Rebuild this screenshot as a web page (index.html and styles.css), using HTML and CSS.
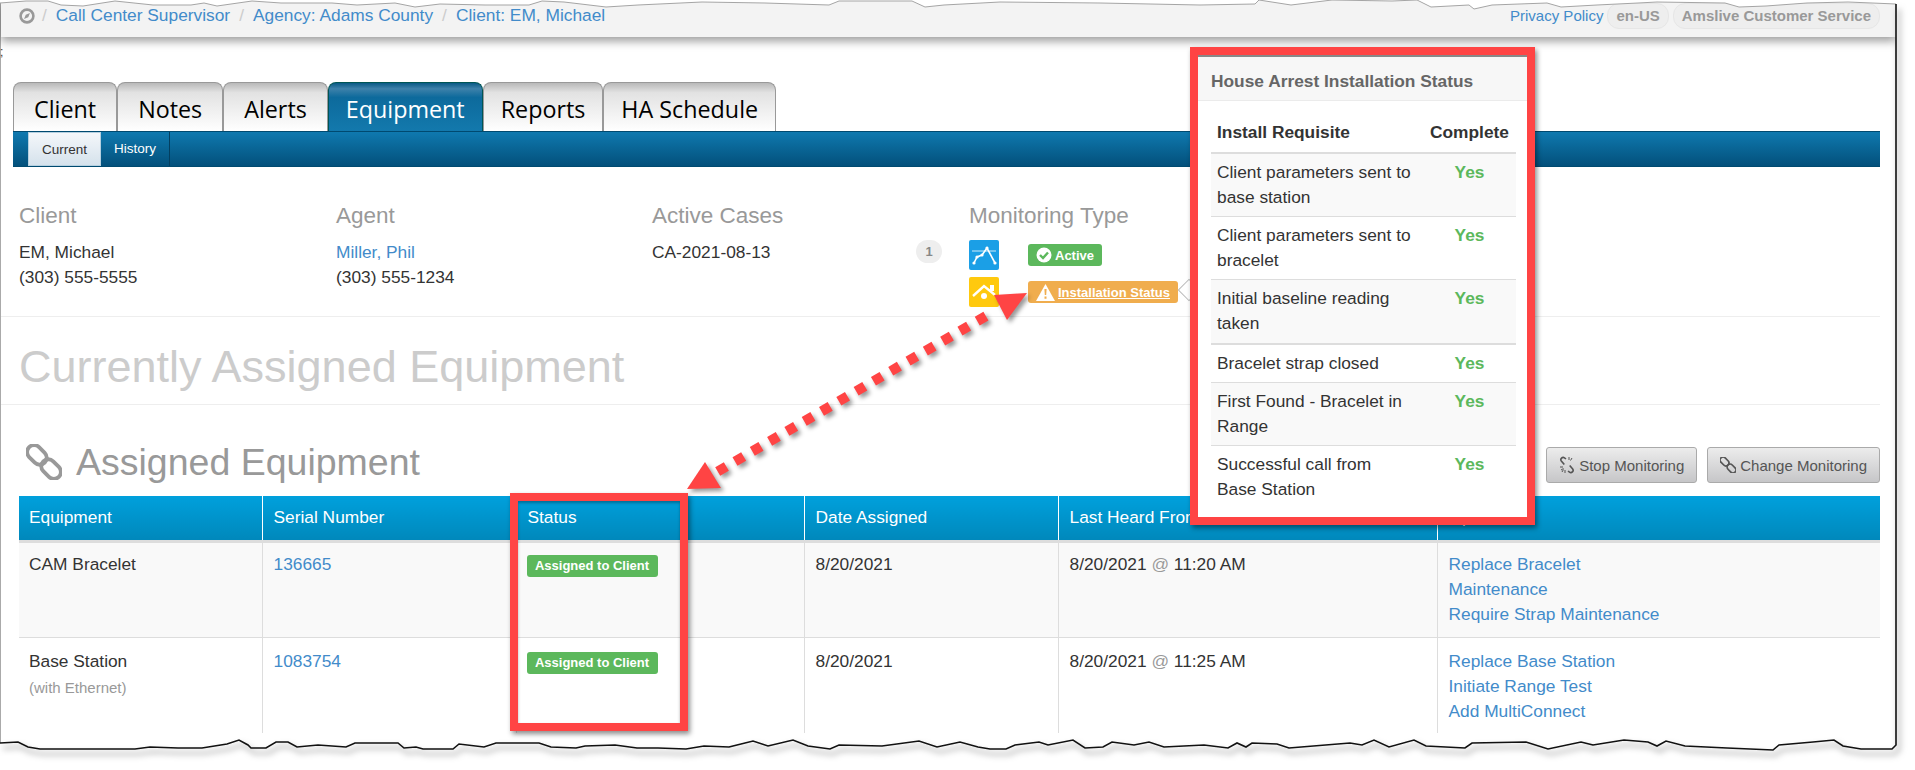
FILE: index.html
```html
<!DOCTYPE html>
<html>
<head>
    <meta charset="UTF-8">
    <meta name="viewport" content="width=device-width, initial-scale=1.0">
    <title>Assigned Equipment</title>
    <link rel="stylesheet" href="styles.css">
</head>
<body>
<div class="page">
    <div class="topbar">
        <div class="crumbs">
            <svg class="home-icon" width="16" height="16" viewBox="0 0 16 16"><circle cx="8" cy="8" r="6.4" fill="none" stroke="#999" stroke-width="2.6"/><path d="M11 5 L9.2 9.2 L5 11 L6.8 6.8 Z" fill="#999"/></svg>
            <span class="sep">/</span>
            <a href="#">Call Center Supervisor</a>
            <span class="sep">/</span>
            <a href="#">Agency: Adams County</a>
            <span class="sep">/</span>
            <a href="#">Client: EM, Michael</a>
        </div>
        <div class="top-right">
            <a href="#">Privacy Policy</a>
            <span class="pill">en-US</span>
            <span class="pill">Amslive Customer Service</span>
        </div>
    </div>

    <div class="tabs">
        <a class="tab" href="#">Client</a>
        <a class="tab" href="#">Notes</a>
        <a class="tab" href="#">Alerts</a>
        <a class="tab active" href="#">Equipment</a>
        <a class="tab" href="#">Reports</a>
        <a class="tab" href="#">HA Schedule</a>
    </div>
    <div class="subnav">
        <a class="subtab current" href="#">Current</a>
        <a class="subtab" href="#">History</a>
    </div>

    <div class="info">
        <div class="info-col">
            <div class="info-label">Client</div>
            <div>EM, Michael</div>
            <div>(303) 555-5555</div>
        </div>
        <div class="info-col">
            <div class="info-label">Agent</div>
            <div><a href="#">Miller, Phil</a></div>
            <div>(303) 555-1234</div>
        </div>
        <div class="info-col">
            <div class="info-label">Active Cases</div>
            <div class="case-row">
                <span>CA-2021-08-13</span>
                <span class="count">1</span>
            </div>
        </div>
        <div class="info-col">
            <div class="info-label">Monitoring Type</div>
            <div class="mon-row">
                <svg class="mon-icon" width="30" height="30" viewBox="0 0 30 30">
                    <rect width="30" height="30" rx="2" fill="#1b9fe6"/>
                    <path d="M3 11 H27" stroke="#fff" stroke-width="1" opacity=".8"/>
                    <path d="M5 23 L8 17 L13 15 L18 8 L26 23" fill="none" stroke="#fff" stroke-width="1.6"/>
                    <circle cx="5" cy="23" r="1.6" fill="#fff"/><circle cx="8" cy="17" r="1.6" fill="#fff"/><circle cx="13" cy="15" r="1.6" fill="#fff"/><circle cx="18" cy="8" r="1.6" fill="#fff"/><circle cx="26" cy="23" r="1.6" fill="#fff"/>
                </svg>
                <span class="label label-green">
                    <svg width="16" height="16" viewBox="0 0 16 16"><circle cx="8" cy="8" r="7.5" fill="#fff"/><path d="M4 8 L7 11 L12 5.5" fill="none" stroke="#5cb85c" stroke-width="2.4"/></svg>
                    Active
                </span>
            </div>
            <div class="mon-row">
                <svg class="mon-icon" width="30" height="30" viewBox="0 0 30 30">
                    <rect width="30" height="30" rx="2" fill="#ffc90e"/>
                    <path d="M4 19 L15 9 L26 18" fill="none" stroke="#fff" stroke-width="2.4"/>
                    <rect x="21" y="8" width="4" height="6" fill="#fff"/>
                    <circle cx="15" cy="19" r="3" fill="#fff"/>
                </svg>
                <span class="label label-orange">
                    <svg width="19" height="17" viewBox="0 0 19 17"><path d="M9.5 0 L19 17 H0 Z" fill="#fff"/><path d="M8.4 5 H10.6 L10.2 11 H8.8 Z M8.5 12.5 H10.5 V14.7 H8.5 Z" fill="#f0ad4e"/></svg>
                    <a href="#">Installation Status</a>
                </span>
            </div>
        </div>
    </div>

    <h1 class="page-title">Currently Assigned Equipment</h1>

    <div class="equip-head">
        <h2 class="equip-title">
            <svg width="36" height="36" viewBox="0 0 36 36"><g fill="none" stroke="#999" stroke-width="3.8" transform="rotate(45 18 18)"><rect x="-3" y="11" width="22" height="14" rx="7"/><rect x="17" y="11" width="22" height="14" rx="7"/></g></svg>
            Assigned Equipment
        </h2>
        <div class="equip-actions">
            <a class="btn" href="#">
                <svg width="16" height="18" viewBox="0 0 16 18"><g fill="none" stroke="#555" stroke-width="1.6"><path d="M7 3 L5.5 1.8 a2.3 2.3 0 0 0 -3.2 3.2 l3 3.5"/><path d="M9 15 L10.5 16.2 a2.3 2.3 0 0 0 3.2 -3.2 l-3 -3.5"/></g><path d="M10 1 V4 M13 2 L11.5 4.5 M1 11 H4 M2 14 L4.5 12.5 M6 14 V17 M3 16 L4.5 13.5" stroke="#555" stroke-width="1"/></svg>
                Stop Monitoring
            </a>
            <a class="btn" href="#">
                <svg width="16" height="16" viewBox="0 0 16 16"><g fill="none" stroke="#555" stroke-width="1.7" transform="rotate(45 8 8)"><rect x="-2" y="5" width="10" height="6" rx="3"/><rect x="8" y="5" width="10" height="6" rx="3"/></g></svg>
                Change Monitoring
            </a>
        </div>
    </div>

    <table class="equip-table">
        <thead>
            <tr>
                <th class="col-equipment">Equipment</th>
                <th class="col-serial">Serial Number</th>
                <th class="col-status">Status</th>
                <th class="col-date">Date Assigned</th>
                <th class="col-heard">Last Heard From</th>
                <th>Options</th>
            </tr>
        </thead>
        <tbody>
            <tr class="row-one">
                <td>CAM Bracelet</td>
                <td><a href="#">136665</a></td>
                <td><span class="label label-green label-small">Assigned to Client</span></td>
                <td>8/20/2021</td>
                <td>8/20/2021 <span class="at">@</span> 11:20 AM</td>
                <td>
                    <a class="option" href="#">Replace Bracelet</a>
                    <a class="option" href="#">Maintenance</a>
                    <a class="option" href="#">Require Strap Maintenance</a>
                </td>
            </tr>
            <tr class="row-two">
                <td>Base Station<small>(with Ethernet)</small></td>
                <td><a href="#">1083754</a></td>
                <td><span class="label label-green label-small">Assigned to Client</span></td>
                <td>8/20/2021</td>
                <td>8/20/2021 <span class="at">@</span> 11:25 AM</td>
                <td>
                    <a class="option" href="#">Replace Base Station</a>
                    <a class="option" href="#">Initiate Range Test</a>
                    <a class="option" href="#">Add MultiConnect</a>
                </td>
            </tr>
        </tbody>
    </table>

    <span class="stray">;</span>

    <!-- popover over the page -->
    <div class="pop-tail"></div>
    <div class="popover">
        <h3 class="pop-title">House Arrest Installation Status</h3>
        <div class="pop-body">
            <table class="pop-table">
                <thead>
                    <tr><th>Install Requisite</th><th class="pop-yes">Complete</th></tr>
                </thead>
                <tbody>
                    <tr><td>Client parameters sent to<br>base station</td><td class="pop-yes yes">Yes</td></tr>
                    <tr><td>Client parameters sent to<br>bracelet</td><td class="pop-yes yes">Yes</td></tr>
                    <tr class="pop-thick"><td>Initial baseline reading<br>taken</td><td class="pop-yes yes">Yes</td></tr>
                    <tr><td>Bracelet strap closed</td><td class="pop-yes yes">Yes</td></tr>
                    <tr><td>First Found - Bracelet in<br>Range</td><td class="pop-yes yes">Yes</td></tr>
                    <tr><td>Successful call from<br>Base Station</td><td class="pop-yes yes">Yes</td></tr>
                </tbody>
            </table>
        </div>
    </div>

    <div class="status-frame"></div>

    <!-- callout arrow -->
    <svg class="callout" width="1915" height="770" viewBox="0 0 1915 770">
        <path d="M717.7 471.5 L986 316" fill="none" stroke="#ff4444" stroke-width="10" stroke-dasharray="10 10"/>
        <polygon points="1027,293 994,295 1007,320" fill="#ff4444"/>
        <polygon points="687,489 705,462 721,488" fill="#ff4444"/>
    </svg>

    <!-- torn screenshot edges -->
    <svg class="torn" width="1915" height="770" viewBox="0 0 1915 770">
        <polygon fill="#fff" points="0,0 1915,0 1915,770 0,770 0,743 18,742 28,747 40,749 135,749 150,747 178,748 202,748 227,744 239,740 248,745 251,748 266,748 276,742 288,742 297,747 318,745 346,747 355,743 398,743 404,748 416,747 423,749 453,749 459,744 484,747 496,743 539,743 551,747 576,748 585,746 615,745 637,748 658,748 686,749 704,746 729,747 753,741 768,746 793,740 808,746 830,749 839,745 882,746 919,741 937,747 960,742 978,747 990,749 1006,749 1015,745 1039,742 1048,745 1073,740 1085,748 1103,747 1112,742 1134,745 1149,742 1164,747 1204,745 1228,748 1237,743 1246,747 1252,743 1277,744 1289,748 1350,743 1362,745 1374,740 1389,747 1414,740 1426,746 1465,748 1472,743 1526,742 1548,749 1581,742 1593,745 1624,740 1648,742 1657,746 1666,741 1685,746 1727,748 1773,750 1779,745 1813,742 1834,740 1843,746 1861,749 1892,749 1896,745 1896,4 1848,2 1807,3 1766,6 1739,7 1725,3 1657,2 1638,3 1597,5 1561,7 1547,3 1492,5 1474,9 1469,5 1431,7 1417,0 1392,1 1332,0 1291,5 1259,0 1255,4 1200,5 1100,3 1000,2 944,5 925,7 912,1 839,1 829,5 765,3 702,2 638,5 606,7 564,2 542,1 529,5 485,5 440,4 415,7 395,3 357,5 332,3 281,3 252,1 217,6 204,3 191,5 153,5 115,1 83,6 61,5 48,1 26,1 0,3"/>
        <polyline class="torn-top" points="0,3 26,1 48,1 61,5 83,6 115,1 153,5 191,5 204,3 217,6 252,1 281,3 332,3 357,5 395,3 415,7 440,4 485,5 529,5 542,1 564,2 606,7 638,5 702,2 765,3 829,5 839,1 912,1 925,7 944,5 1000,2 1100,3 1200,5 1255,4 1259,0 1291,5 1332,0 1392,1 1417,0 1431,7 1469,5 1474,9 1492,5 1547,3 1561,7 1597,5 1638,3 1657,2 1725,3 1739,7 1766,6 1807,3 1848,2 1896,4"/>
        <polyline class="torn-bottom" points="0,743 18,742 28,747 40,749 135,749 150,747 178,748 202,748 227,744 239,740 248,745 251,748 266,748 276,742 288,742 297,747 318,745 346,747 355,743 398,743 404,748 416,747 423,749 453,749 459,744 484,747 496,743 539,743 551,747 576,748 585,746 615,745 637,748 658,748 686,749 704,746 729,747 753,741 768,746 793,740 808,746 830,749 839,745 882,746 919,741 937,747 960,742 978,747 990,749 1006,749 1015,745 1039,742 1048,745 1073,740 1085,748 1103,747 1112,742 1134,745 1149,742 1164,747 1204,745 1228,748 1237,743 1246,747 1252,743 1277,744 1289,748 1350,743 1362,745 1374,740 1389,747 1414,740 1426,746 1465,748 1472,743 1526,742 1548,749 1581,742 1593,745 1624,740 1648,742 1657,746 1666,741 1685,746 1727,748 1773,750 1779,745 1813,742 1834,740 1843,746 1861,749 1892,749 1896,745 1896,4"/>
    </svg>
</div>
</body>
</html>
```

FILE: styles.css
```css
html, body {
    margin: 0;
    background: #fff;
}
body {
    font-family: "Liberation Sans", Arial, sans-serif;
    font-size: 17.33px;
    line-height: 25px;
    color: #333;
}
a {
    color: #428bca;
    text-decoration: none;
}
.page {
    position: relative;
    width: 1915px;
    height: 770px;
    padding-left: 1px;
    box-sizing: border-box;
    overflow: hidden;
    box-shadow: inset 1px 0 #aaa;
}

/* top bar */
.topbar {
    display: flex;
    justify-content: space-between;
    align-items: center;
    width: 1895px;
    height: 37px;
    padding: 0 16px 6px 18px;
    box-sizing: border-box;
    background: #f3f3f3;
    box-shadow: 0 4px 9px rgba(0,0,0,0.4);
}
.crumbs {
    display: flex;
    align-items: center;
    gap: 9px;
}
.home-icon {
    margin-right: -2px;
}
.sep {
    color: #ccc;
}
.top-right {
    display: flex;
    align-items: center;
    gap: 4px;
    font-size: 15px;
}
.pill {
    padding: 0 8px;
    height: 24px;
    line-height: 24px;
    font-weight: bold;
    color: #999;
    background: #eee;
    border: 1px solid #e6e6e6;
    border-radius: 12px;
}

/* tabs */
.tabs {
    display: flex;
    margin: 45px 0 0 12px;
}
.tab {
    height: 48px;
    padding: 0 20px;
    line-height: 52px;
    font-family: "Open Sans", sans-serif;
    font-size: 23.3px;
    color: #000;
    background: linear-gradient(#b9b9b9, #e2e2e2 20%, #fff);
    border: 1px solid #999;
    border-bottom: none;
    border-radius: 8px 8px 0 0;
}
.tab:nth-child(n+4) {
    padding: 0 17px;
}
.tab.active {
    color: #fff;
    background: linear-gradient(#0a5a86, #3d81aa 12%, #0d6a9c 30%, #1379ad);
    border-color: #055;
}
.subnav {
    display: flex;
    width: 1867px;
    height: 36px;
    margin-left: 12px;
    padding-left: 15px;
    box-sizing: border-box;
    background: linear-gradient(#0f79af, #03507b);
    border-top: 1px solid #004a70;
    border-bottom: 1px solid #004a70;
}
.subtab {
    padding: 0 13px;
    font-size: 13.5px;
    line-height: 34px;
    color: #fff;
    border-right: 1px solid #033f60;
}
.subtab.current {
    color: #333;
    background: linear-gradient(#f4f7fa, #d5e2ec);
    border: 1px solid #b5d0e0;
}

/* client info */
.info {
    display: grid;
    grid-template-columns: 317px 316px 317px 1fr;
    width: 1879px;
    height: 150px;
    padding: 37px 0 0 18px;
    box-sizing: border-box;
    border-bottom: 1px solid #eee;
}
.info-label {
    margin-bottom: 12px;
    font-size: 22.5px;
    line-height: 24px;
    color: #999;
}
.case-row {
    display: flex;
    justify-content: space-between;
    padding-right: 27px;
}
.count {
    width: 26px;
    height: 23px;
    font-size: 13px;
    font-weight: bold;
    line-height: 23px;
    text-align: center;
    color: #888;
    background: #eee;
    border-radius: 12px;
}
.mon-row {
    display: flex;
    align-items: center;
    gap: 29px;
    margin-bottom: 7px;
}
.mon-icon {
    display: block;
}
.label {
    display: inline-flex;
    align-items: center;
    gap: 3px;
    height: 22px;
    padding: 0 8px;
    box-sizing: border-box;
    font-size: 13px;
    font-weight: bold;
    color: #fff;
    border-radius: 3px;
}
.label a {
    color: #fff;
    text-decoration: underline;
}
.label-green {
    background: #5cb85c;
}
.label-orange {
    background: #f0ad4e;
}
.label-small {
    width: 131px;
    justify-content: center;
    padding: 0;
    vertical-align: top;
    margin: 3px 0 0 -1px;
}

/* headings */
.page-title {
    width: 1879px;
    height: 88px;
    margin: 0;
    padding: 26px 0 0 18px;
    box-sizing: border-box;
    font-size: 45px;
    font-weight: normal;
    line-height: 48px;
    color: #ccc;
    border-bottom: 1px solid #eee;
}
.equip-head {
    display: flex;
    justify-content: space-between;
    width: 1879px;
    height: 91px;
    padding-top: 42px;
    box-sizing: border-box;
}
.equip-title {
    display: flex;
    align-items: center;
    gap: 14px;
    height: 46px;
    margin: -8px 0 0 25px;
    font-size: 37.5px;
    font-weight: normal;
    color: #999;
}
.equip-actions {
    display: flex;
    gap: 10px;
}
.btn {
    display: flex;
    align-items: center;
    justify-content: center;
    gap: 4px;
    height: 36px;
    padding: 0 12px;
    box-sizing: border-box;
    font-size: 15px;
    color: #555;
    background: linear-gradient(#ececec, #c6c6c8);
    border: 1px solid #aaa;
    border-radius: 3px;
}

/* equipment table */
.equip-table {
    width: 1861px;
    margin-left: 18px;
    table-layout: fixed;
    border-collapse: collapse;
}
.equip-table th {
    height: 45px;
    padding: 0 10px 0 11px;
    box-sizing: border-box;
    font-weight: normal;
    text-align: left;
    color: #fff;
    background: linear-gradient(#00a0dc, #0088bb);
    border-left: 1px solid #fff;
    border-bottom: 3px solid #ddd;
}
.equip-table th:first-child,
.equip-table td:first-child {
    border-left: none;
    padding-left: 10px;
}
.col-equipment { width: 243px; }
.col-serial { width: 254px; }
.col-status { width: 288px; }
.col-date { width: 254px; }
.col-heard { width: 379px; }
.equip-table td {
    padding: 9px 10px 0 11px;
    vertical-align: top;
    border-left: 1px solid #ddd;
}
.row-one td {
    height: 85px;
    background: #f9f9f9;
    border-bottom: 1px solid #ddd;
}
.row-two td {
    height: 84px;
    padding-top: 11px;
}
.equip-table small {
    display: block;
    margin-top: 1px;
    font-size: 15px;
    color: #999;
}
.at {
    color: #999;
}
.option {
    display: block;
}
.stray {
    position: absolute;
    left: 0;
    top: 40px;
    font-size: 12px;
}

/* popover */
.pop-tail {
    position: absolute;
    left: 1181px;
    top: 282px;
    width: 14px;
    height: 14px;
    background: #fff;
    border: 1px solid #bbb;
    transform: rotate(45deg);
}
.popover {
    position: absolute;
    left: 1190px;
    top: 47px;
    width: 345px;
    height: 478px;
    box-sizing: border-box;
    background: #fff;
    border: 8px solid #ff4444;
    box-shadow: 2px 3px 5px rgba(0,0,0,0.45);
}
.pop-title {
    height: 46px;
    margin: 0;
    padding: 2px 13px 0;
    box-sizing: border-box;
    font-size: 17.33px;
    line-height: 44px;
    color: #666;
    background: #f7f7f7;
    border-top: 2px solid #888;
    border-bottom: 1px solid #ebebeb;
}
.pop-body {
    padding: 13px 12px 0 13px;
}
.pop-table {
    width: 305px;
    table-layout: fixed;
    border-collapse: collapse;
}
.pop-table th {
    padding: 6px 6px 7px;
    text-align: left;
    border-bottom: 2px solid #ddd;
}
.pop-table td {
    padding: 6px;
    vertical-align: top;
    border-top: 1px solid #ddd;
}
.pop-table tbody tr:nth-child(odd) td {
    background: #f9f9f9;
}
.pop-table .pop-thick td {
    padding-bottom: 7px;
    border-bottom: 2px solid #ddd;
}
.pop-table th.pop-yes {
    width: 93px;
    box-sizing: border-box;
    text-align: center;
}
.pop-yes {
    text-align: center;
}
.yes {
    font-weight: bold;
    color: #5cb85c;
}

/* overlays */
.status-frame {
    position: absolute;
    left: 510px;
    top: 493px;
    width: 178px;
    height: 238px;
    box-sizing: border-box;
    border: 8px solid #ff4444;
    box-shadow: 2px 3px 5px rgba(0,0,0,0.45), inset 0 2px 3px rgba(0,0,0,0.3);
}
.callout {
    position: absolute;
    left: 0;
    top: 0;
    pointer-events: none;
    filter: drop-shadow(3px 3px 2px rgba(0,0,0,0.4));
}
.torn {
    position: absolute;
    left: 0;
    top: 0;
    pointer-events: none;
}
.torn-top {
    fill: none;
    stroke: #a5a5a5;
    stroke-width: 1;
}
.torn-bottom {
    fill: none;
    stroke: #111;
    stroke-width: 1.6;
    filter: drop-shadow(3px 5px 3px rgba(0,0,0,0.55));
}
```
